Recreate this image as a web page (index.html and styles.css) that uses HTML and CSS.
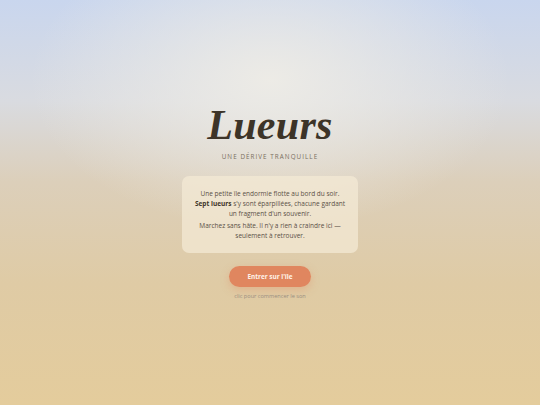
FILE: index.html
```html
<!DOCTYPE html>
<html lang="fr">
<head>
<meta charset="utf-8">
<title>Lueurs</title>
<link rel="stylesheet" href="styles.css">
</head>
<body>
<main class="intro">
  <h1 class="title">Lueurs</h1>
  <p class="subtitle">Une dérive tranquille</p>
  <div class="card">
    <p>Une petite île endormie flotte au bord du soir.<br><strong>Sept lueurs</strong> s'y sont éparpillées, chacune gardant<br>un fragment d'un souvenir.</p>
    <p>Marchez sans hâte. Il n'y a rien à craindre ici —<br>seulement à retrouver.</p>
  </div>
  <button class="enter">Entrer sur l'île</button>
  <p class="hint">clic pour commencer le son</p>
</main>
</body>
</html>
```
FILE: styles.css
```css
html, body {
  margin: 0;
  height: 100%;
}
body {
  background:
    radial-gradient(ellipse 240px 150px at 270px 80px, rgba(238,236,230,0.95), rgba(238,236,230,0) 100%),
    linear-gradient(180deg, #c9d6ee 0%, #d9dbe0 25%, #dccfba 45%, #dfcba5 70%, #e4cc9c 100%);
  font-family: "Open Sans", "DejaVu Sans", sans-serif;
  color: #4a4036;
}
.intro {
  display: flex;
  flex-direction: column;
  align-items: center;
  padding-top: 101px;
}
.title {
  margin: 0;
  font-family: "Liberation Serif", "DejaVu Serif", serif;
  font-style: italic;
  font-weight: bold;
  font-size: 42px;
  line-height: 48px;
  color: #3d3428;
  letter-spacing: 0.3px;
}
.subtitle {
  margin: 3px 0 0;
  font-size: 6.3px;
  letter-spacing: 1.05px;
  text-transform: uppercase;
  color: #7a6e60;
}
.card {
  margin-top: 15px;
  width: 176px;
  box-sizing: border-box;
  padding: 13px 8px 12px;
  background: rgba(244, 234, 214, 0.72);
  border-radius: 7px;
  text-align: center;
  font-size: 6.5px;
  line-height: 10px;
  color: #5a5046;
}
.card p {
  margin: 0;
}
.card p + p {
  margin-top: 1.5px;
}
.card strong {
  color: #3d3428;
}
.enter {
  margin-top: 13px;
  width: 82px;
  height: 21px;
  border: none;
  border-radius: 11px;
  background: #e0865f;
  color: #fff3ea;
  font-family: "Open Sans", "DejaVu Sans", sans-serif;
  font-weight: bold;
  font-size: 6.4px;
  box-shadow: 0 3px 8px rgba(224, 134, 95, 0.35);
}
.hint {
  margin: 5px 0 0;
  font-size: 5.6px;
  color: #9a8e80;
}
```
